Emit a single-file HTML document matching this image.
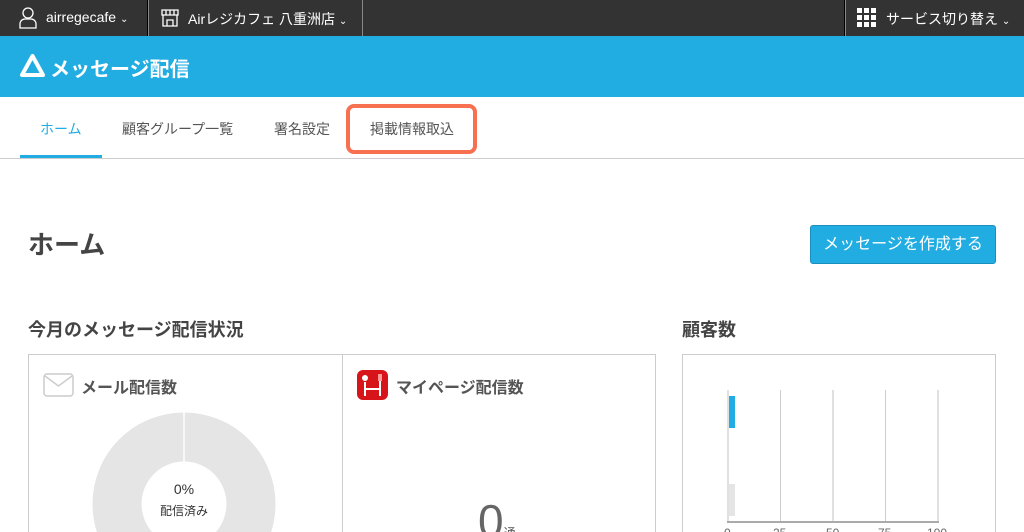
<!DOCTYPE html><html><head><meta charset="utf-8"><style>
*{margin:0;padding:0;box-sizing:border-box}
html,body{width:1024px;height:532px;overflow:hidden}
body{background:#fff;font-family:"Liberation Sans","Noto Sans CJK JP",sans-serif;color:#333}
#w{position:relative;width:1024px;height:532px;overflow:hidden}
.a{position:absolute}
</style></head><body><div id="w">
<div class="a" style="left:0;top:0;width:1024px;height:36px;background:#333"></div>
<div class="a" style="left:147px;top:0;width:1px;height:36px;background:#000"></div>
<div class="a" style="left:148px;top:0;width:1px;height:36px;background:#888"></div>
<div class="a" style="left:362px;top:0;width:1px;height:36px;background:#888"></div>
<div class="a" style="left:844px;top:0;width:1px;height:36px;background:#000"></div>
<div class="a" style="left:845px;top:0;width:1px;height:36px;background:#888"></div>
<svg class="a" style="left:19px;top:7px" width="18" height="22" viewBox="0 0 18 22"><circle cx="9" cy="6" r="5" fill="none" stroke="#fff" stroke-width="1.3"/><path d="M1 21v-4a5 5 0 0 1 5-5h6a5 5 0 0 1 5 5v4z" fill="none" stroke="#fff" stroke-width="1.3"/></svg>
<div class="a" style="left:46px;top:9px;color:#fff;font-size:14px">airregecafe <span style="font-size:10px">⌄</span></div>
<svg class="a" style="left:160px;top:8px" width="20" height="20" viewBox="0 0 20 20" fill="none" stroke="#fff" stroke-width="1.3"><path d="M2 2h16v5H2zM6 2v5M10 2v5M14 2v5M3 7v11h14V7M7 18v-6h6v6"/></svg>
<div class="a" style="left:188px;top:9px;color:#fff;font-size:14px">Airレジカフェ 八重洲店 <span style="font-size:10px">⌄</span></div>
<svg class="a" style="left:857px;top:8px" width="20" height="20"><g fill="#fff"><rect x="0" y="0" width="5" height="5"/><rect x="7" y="0" width="5" height="5"/><rect x="14" y="0" width="5" height="5"/><rect x="0" y="7" width="5" height="5"/><rect x="7" y="7" width="5" height="5"/><rect x="14" y="7" width="5" height="5"/><rect x="0" y="14" width="5" height="5"/><rect x="7" y="14" width="5" height="5"/><rect x="14" y="14" width="5" height="5"/></g></svg>
<div class="a" style="left:886px;top:9px;color:#fff;font-size:14px">サービス切り替え <span style="font-size:10px">⌄</span></div>
<div class="a" style="left:0;top:36px;width:1024px;height:61px;background:#22ade2"></div>
<svg class="a" style="left:19px;top:53px" width="27" height="26" viewBox="0 0 27 26"><path d="M13.5 3L3 22h21z" fill="none" stroke="#fff" stroke-width="4" stroke-linejoin="round"/></svg>
<div class="a" style="left:50px;top:53px;color:#fff;font-size:20px;font-weight:bold">メッセージ配信</div>
<div class="a" style="left:0;top:158px;width:1024px;height:1px;background:#ccc"></div>
<div class="a" style="left:20px;top:155px;width:82px;height:3px;background:#22ade2"></div>
<div class="a" style="left:40px;top:119px;font-size:14px;color:#22ade2">ホーム</div>
<div class="a" style="left:122px;top:119px;font-size:14px;color:#555">顧客グループ一覧</div>
<div class="a" style="left:274px;top:119px;font-size:14px;color:#555">署名設定</div>
<div class="a" style="left:370px;top:119px;font-size:14px;color:#555">掲載情報取込</div>
<div class="a" style="left:346px;top:104px;width:131px;height:50px;border:4px solid #f7704f;border-radius:8px"></div>
<div class="a" style="left:28px;top:225px;font-size:26px;font-weight:bold;color:#444">ホーム</div>
<div class="a" style="left:810px;top:225px;width:186px;height:39px;background:#22ade2;border:1px solid #1a8fbf;border-radius:3px;color:#fff;font-size:16px;text-align:center;line-height:37px">メッセージを作成する</div>
<div class="a" style="left:28px;top:316px;font-size:18px;font-weight:bold;color:#444">今月のメッセージ配信状況</div>
<div class="a" style="left:682px;top:316px;font-size:18px;font-weight:bold;color:#444">顧客数</div>
<div class="a" style="left:28px;top:354px;width:628px;height:178px;border:1px solid #ccc;border-bottom:none"></div>
<div class="a" style="left:342px;top:354px;width:1px;height:178px;background:#ccc"></div>
<div class="a" style="left:682px;top:354px;width:314px;height:178px;border:1px solid #ccc;border-bottom:none"></div>
<svg class="a" style="left:43px;top:373px" width="31" height="24" viewBox="0 0 31 24"><rect x="1" y="1" width="29" height="22" rx="3" fill="none" stroke="#ccc" stroke-width="1.5"/><path d="M2 3l13.5 10L29 3" fill="none" stroke="#ccc" stroke-width="1.5"/></svg>
<div class="a" style="left:81px;top:374px;font-size:16px;font-weight:bold;color:#555">メール配信数</div>
<svg class="a" style="left:357px;top:370px" width="31" height="30" viewBox="0 0 31 30"><rect width="31" height="30" rx="6" fill="#d7141a"/><path d="M8 12v14M23 10v16M8 19h15" stroke="#fff" stroke-width="2" fill="none"/><circle cx="8" cy="8" r="3" fill="#fff"/><rect x="21" y="4" width="4" height="7" fill="#f99"/></svg>
<div class="a" style="left:396px;top:374px;font-size:16px;font-weight:bold;color:#555">マイページ配信数</div>
<svg class="a" style="left:92px;top:412px" width="184" height="120"><circle cx="92" cy="92" r="67" fill="none" stroke="#e5e5e5" stroke-width="49"/><line x1="92" y1="0" x2="92" y2="50" stroke="#fff" stroke-width="1.5"/></svg>
<div class="a" style="left:134px;top:481px;width:100px;text-align:center;font-size:14px;color:#333">0%</div>
<div class="a" style="left:134px;top:502px;width:100px;text-align:center;font-size:12px;color:#333">配信済み</div>
<div class="a" style="left:478px;top:496px;font-size:46px;color:#666;line-height:50px;height:36px;overflow:hidden">0<span style="font-size:12px;color:#555">通</span></div>
<div class="a" style="left:727px;top:390px;width:2px;height:132px;background:#e0e0e0"></div>
<div class="a" style="left:780px;top:390px;width:1px;height:132px;background:#ccc"></div>
<div class="a" style="left:832px;top:390px;width:2px;height:132px;background:#e0e0e0"></div>
<div class="a" style="left:885px;top:390px;width:1px;height:132px;background:#ccc"></div>
<div class="a" style="left:937px;top:390px;width:2px;height:132px;background:#e0e0e0"></div>
<div class="a" style="left:729px;top:396px;width:6px;height:32px;background:#22ade2"></div>
<div class="a" style="left:729px;top:484px;width:6px;height:32px;background:#e5e5e5"></div>
<div class="a" style="left:727px;top:521px;width:212px;height:2px;background:#aaa"></div>
<div class="a" style="left:720px;top:526px;width:300px;height:6px;overflow:hidden;font-size:12px;color:#666;line-height:14px"><span class="a" style="left:4px">0</span><span class="a" style="left:53px">25</span><span class="a" style="left:106px">50</span><span class="a" style="left:158px">75</span><span class="a" style="left:207px">100</span></div>
</div></body></html>
